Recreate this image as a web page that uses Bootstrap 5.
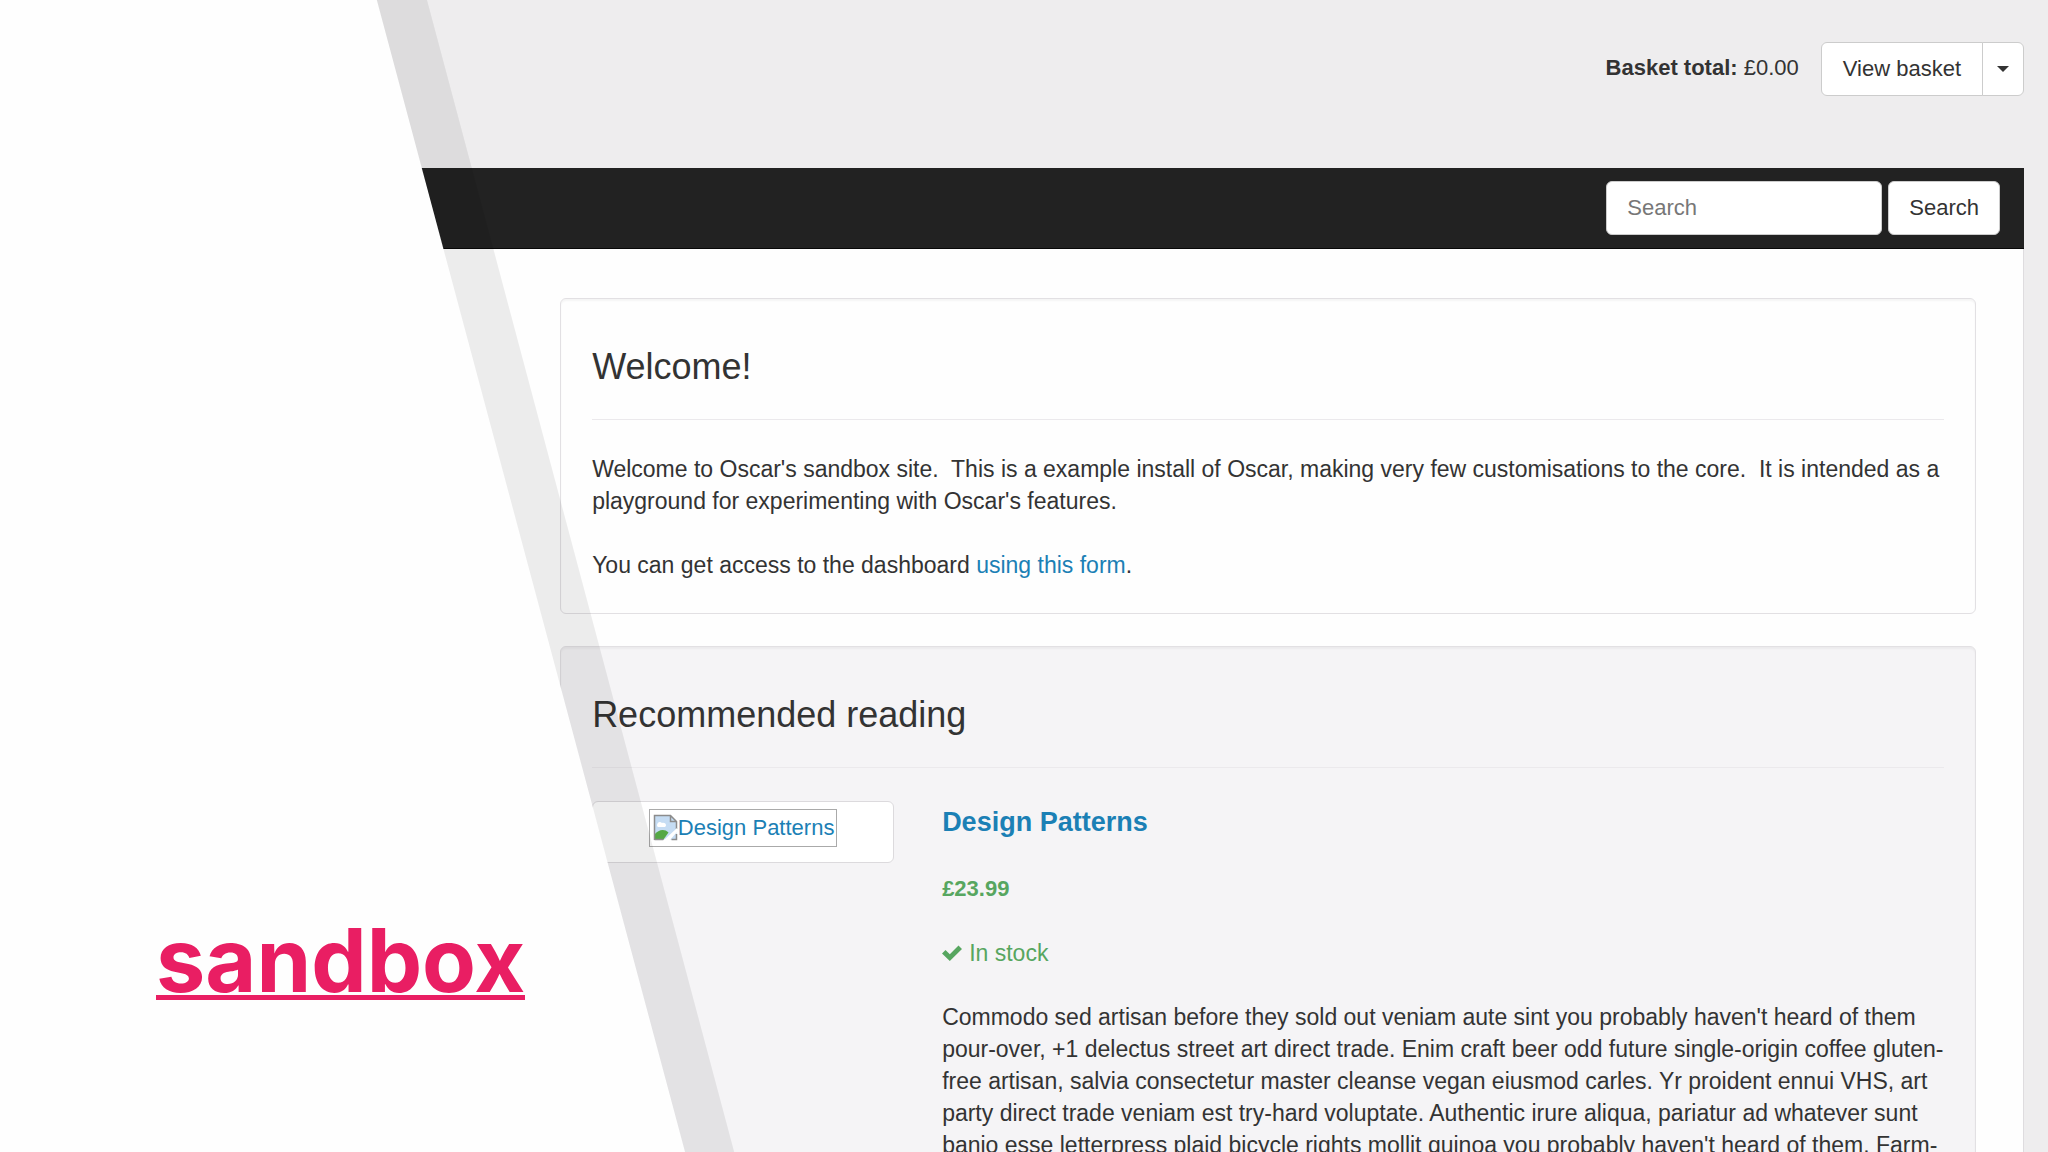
<!DOCTYPE html>
<html lang="en">
<head>
<meta charset="utf-8">
<meta name="viewport" content="width=device-width, initial-scale=1">
<title>Oscar sandbox</title>
<link href="https://cdn.jsdelivr.net/npm/bootstrap@5.3.0/dist/css/bootstrap.min.css" rel="stylesheet">
<style>
  body { font-family: "Liberation Sans", Arial, sans-serif; font-size: 23px; line-height: 32px; color: #333; background: #eeedee; }
  .hero { height: 100vh; }
  .site { margin-right: 24px; }
  .site-header { height: 168px; padding-top: 42px; font-size: 22px; }
  .basket-total { margin-right: 22px; padding-top: 10px; }
  .btn-shop { --bs-btn-font-size: 22px; --bs-btn-line-height: 32px; --bs-btn-padding-y: 10px; --bs-btn-padding-x: 20px; --bs-btn-bg: #fff; --bs-btn-color: #333; --bs-btn-border-color: #ccc; --bs-btn-border-radius: 6px; --bs-btn-hover-bg: #eee; --bs-btn-hover-border-color: #bbb; }
  .btn-basket { --bs-btn-padding-x: 21px; }
  .btn-caret { --bs-btn-padding-x: 14px; }
  .caret-icon { width: 12px; height: 6px; }
  .shop-nav { background: #222; height: 81px; padding: 0 24px; border-bottom: 1px solid #080808; }
  .search-form { gap: 6px; }
  .search-box { width: 276px; height: 54px; font-size: 22px; line-height: 32px; padding: 10px 20px; border: 1px solid #ccc; border-radius: 6px; color: #555; }
  .search-box::placeholder { color: #777; }
  .page { background: #fefefe; border-right: 1px solid #dedcdf; padding: 49px 47px 0 27.35vw; }
  .panel { border: 1px solid #e2e0e3; border-radius: 6px; padding: 0 31px; margin-bottom: 32px; box-shadow: inset 0 2px 2px rgba(0,0,0,.04); }
  .panel-grey { background: #f5f4f6; }
  .panel h2 { font-size: 36px; line-height: 40px; margin: 0 0 33px; padding: 48px 0 32px; border-bottom: 1px solid #ebe9ec; font-weight: 400; }
  .panel p { margin: 0 0 32px; }
  .shop-link { color: #1b80b5; text-decoration: none; }
  .thumb { width: 302px; height: 62px; padding-top: 7px; background: #fff; border: 1px solid #dcdadd; border-radius: 6px; }
  .missing { font-size: 22px; border: 1px solid #aaa; padding: 2px 2px 2px 3px; color: #1b80b5; text-decoration: none; }
  .missing svg { width: 25px; height: 28px; }
  .product { gap: 48px; margin-right: -16px; }
  .product h3 { font-size: 27px; line-height: 32px; margin: 5px 0 35px; font-weight: 700; }
  .good { color: #57a660; }
  .price { font-size: 22px; }
  .tick { width: 21px; height: 16px; margin-right: 6px; }
  .slope { clip-path: polygon(0 0, 18.4% 0, 33.45% 100%, 0 100%); background: #fefefe; }
  .slope-shade { clip-path: polygon(18.36% 0, 20.85% 0, 35.85% 100%, 33.4% 100%); background: rgba(0,0,0,.07); }
  .brand { font-family: Inter, "Open Sans", sans-serif; font-weight: 700; font-size: 88px; line-height: 100px; margin: 0 0 152px 156px; color: #e91e63; text-decoration: none; border-bottom: 5px solid #e91e63; }
  .brand-text { display: block; height: 85px; }
</style>
<script src="https://cdn.jsdelivr.net/npm/bootstrap@5.3.0/dist/js/bootstrap.bundle.min.js"></script>
</head>
<body>
<div class="hero position-relative overflow-hidden">
  <div class="site">
    <header class="site-header d-flex justify-content-end align-items-start">
      <div class="basket-total"><strong>Basket total:</strong> £0.00</div>
      <div class="btn-group">
        <button type="button" class="btn btn-shop btn-basket">View basket</button>
        <button type="button" class="btn btn-shop btn-caret" aria-label="Basket menu"><svg class="caret-icon d-block" viewBox="0 0 12 6" aria-hidden="true"><path d="M0 0h12L6 6z" fill="#333"/></svg></button>
      </div>
    </header>
    <nav class="shop-nav d-flex align-items-center justify-content-end">
      <form class="search-form d-flex">
        <input type="search" class="search-box" placeholder="Search" aria-label="Search">
        <button type="button" class="btn btn-shop">Search</button>
      </form>
    </nav>
    <main class="page">
      <section class="panel">
        <h2>Welcome!</h2>
        <p>Welcome to Oscar's sandbox site.&nbsp; This is a example install of Oscar, making very few customisations to the core.&nbsp; It is intended as a playground for experimenting with Oscar's features.</p>
        <p>You can get access to the dashboard <a href="#" class="shop-link">using this form</a>.</p>
      </section>
      <section class="panel panel-grey">
        <h2>Recommended reading</h2>
        <article class="product d-flex align-items-start">
          <div class="thumb flex-shrink-0 d-flex justify-content-center align-items-start">
            <a href="#" class="missing d-flex align-items-center">
              <svg viewBox="0 0 25 28" aria-hidden="true"><path d="M1.500 1.500h16l6 6v18h-22z" fill="#c5dcf3"/><path d="M4 12c0-4 3-5 5-3 4-1 5 3 3 4H5z" fill="#fff"/><path d="M1.500 25.500v-5c4-5 10-6 14-2l-5 7z" fill="#55a845"/><path d="M1.500 26V1.500h16l6 6V15M17.500 1.500v6h6M23.500 20v5.500h-5M1.500 25.500h9" fill="none" stroke="#8c8c8c" stroke-width="1.500"/><path d="M10 27l14-13v4l-8 9z" fill="#fff"/></svg>
              <span>Design Patterns</span>
            </a>
          </div>
          <div>
            <h3><a href="#" class="shop-link">Design Patterns</a></h3>
            <p class="good price fw-bold">£23.99</p>
            <p class="good d-flex align-items-center"><svg class="tick" viewBox="0 0 21 16" aria-hidden="true"><path d="M0 8.500L3.500 5l4.300 4.200L16.500 0.500 20 4 7.800 16z" fill="#57a660"/></svg>In stock</p>
            <p>Commodo sed artisan before they sold out veniam aute sint you probably haven't heard of them pour-over, +1 delectus street art direct trade. Enim craft beer odd future single-origin coffee gluten-free artisan, salvia consectetur master cleanse vegan eiusmod carles. Yr proident ennui VHS, art party direct trade veniam est try-hard voluptate. Authentic irure aliqua, pariatur ad whatever sunt banjo esse letterpress plaid bicycle rights mollit quinoa you probably haven't heard of them. Farm-</p>
          </div>
        </article>
      </section>
    </main>
  </div>
  <div class="slope-shade position-absolute top-0 start-0 w-100 h-100 pe-none"></div>
  <div class="slope position-absolute top-0 start-0 w-100 h-100 d-flex align-items-end pe-none">
    <a href="#" class="brand pe-auto"><span class="brand-text">sandbox</span></a>
  </div>
</div>
</body>
</html>
